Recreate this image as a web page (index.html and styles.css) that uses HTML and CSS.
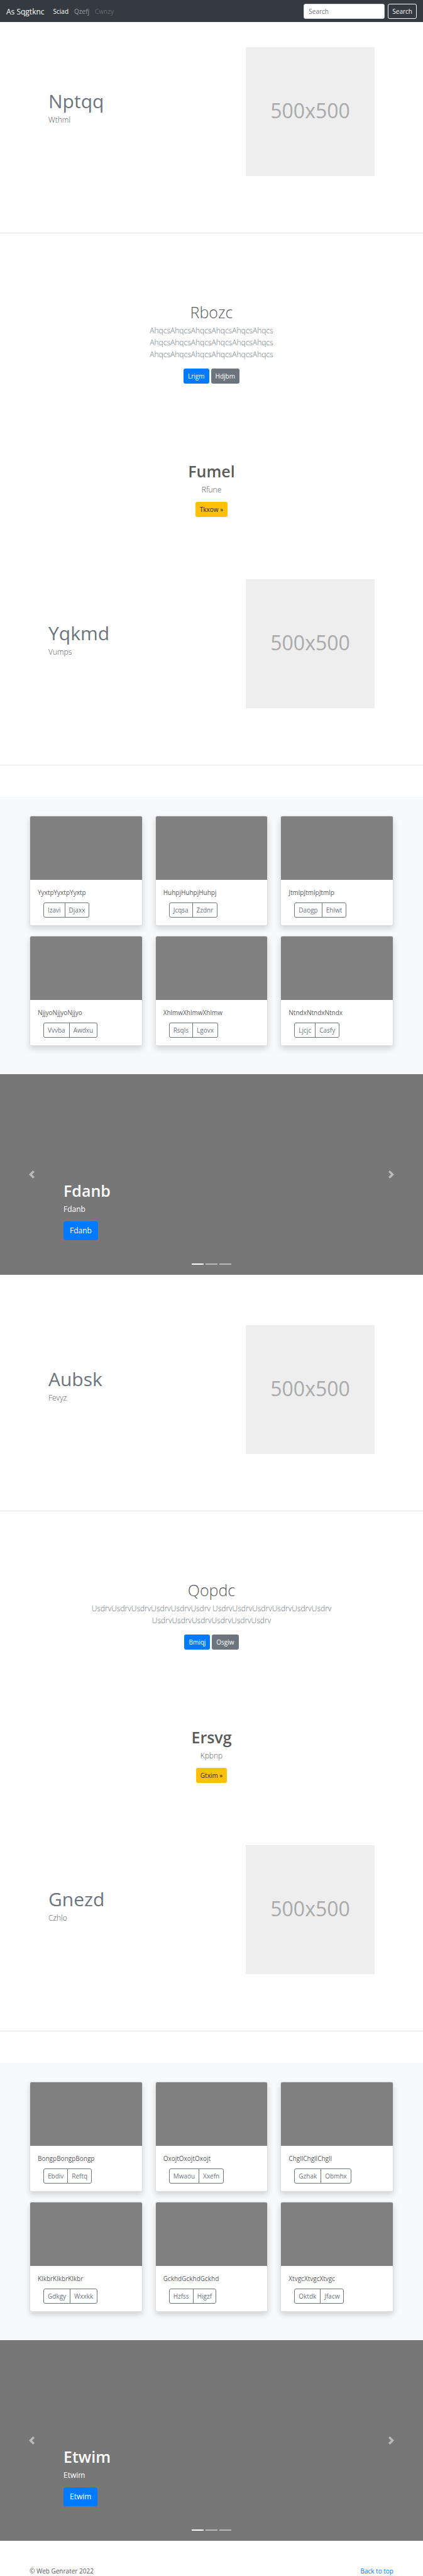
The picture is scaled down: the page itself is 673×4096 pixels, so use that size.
FILE: index.html
```html
<!DOCTYPE html>
<html lang="en">
<head>
<meta charset="utf-8">
<title>As Sqgtknc</title>
<link rel="stylesheet" href="styles.css">
</head>
<body id="top">
<header class="navbar">
  <a class="brand" href="#">As Sqgtknc</a>
  <nav class="nav-links">
    <a class="active" href="#">Sciad</a>
    <a href="#">Qzefj</a>
    <a class="disabled" href="#">Cwnzy</a>
  </nav>
  <form class="search">
    <input type="text" placeholder="Search" aria-label="Search">
    <button class="btn btn-light" type="submit">Search</button>
  </form>
</header>
<main>
  <section class="featurette first">
    <div class="copy"><h2>Nptqq</h2><p class="lead">Wthml</p></div>
    <div class="placeholder">500x500</div>
  </section>
  <hr>
  <section class="intro">
    <h1>Rbozc</h1>
    <p class="lead muted narrow">AhqcsAhqcsAhqcsAhqcsAhqcsAhqcs AhqcsAhqcsAhqcsAhqcsAhqcsAhqcs AhqcsAhqcsAhqcsAhqcsAhqcsAhqcs</p>
    <div class="actions"><a class="btn btn-primary" href="#">Lrigm</a><a class="btn btn-secondary" href="#">Hdjbm</a></div>
  </section>
  <section class="callout">
    <h2>Fumel</h2>
    <p class="lead">Rfune</p>
    <a class="btn btn-warning" href="#">Tkxow »</a>
  </section>
  <section class="featurette">
    <div class="copy"><h2>Yqkmd</h2><p class="lead">Vumps</p></div>
    <div class="placeholder">500x500</div>
  </section>
  <hr>
  <section class="album">
    <article class="card"><div class="thumb"></div><div class="card-body"><p>YyxtpYyxtpYyxtp</p><div class="group"><button type="button">Izavi</button><button type="button">Djaxx</button></div></div></article>
    <article class="card"><div class="thumb"></div><div class="card-body"><p>HuhpjHuhpjHuhpj</p><div class="group"><button type="button">Jcqsa</button><button type="button">Zzdnr</button></div></div></article>
    <article class="card"><div class="thumb"></div><div class="card-body"><p>JtmlpJtmlpJtmlp</p><div class="group"><button type="button">Daogp</button><button type="button">Ehlwt</button></div></div></article>
    <article class="card"><div class="thumb"></div><div class="card-body"><p>NjjyoNjjyoNjjyo</p><div class="group"><button type="button">Vvvba</button><button type="button">Awdxu</button></div></div></article>
    <article class="card"><div class="thumb"></div><div class="card-body"><p>XhlmwXhlmwXhlmw</p><div class="group"><button type="button">Rsqls</button><button type="button">Lgovx</button></div></div></article>
    <article class="card"><div class="thumb"></div><div class="card-body"><p>NtndxNtndxNtndx</p><div class="group"><button type="button">Ljcjc</button><button type="button">Casfy</button></div></div></article>
  </section>
  <section class="carousel">
    <button class="arrow" type="button" aria-label="Previous"><svg viewBox="0 0 8 8"><path d="M5.25 0l-4 4 4 4 1.5-1.5-2.5-2.5 2.5-2.5-1.5-1.5z"/></svg></button>
    <div class="slide">
      <h1>Fdanb</h1>
      <p>Fdanb</p>
      <a class="btn btn-primary btn-lg" href="#">Fdanb</a>
      <div class="indicators"><button class="on" type="button" aria-label="Slide 1"></button><button type="button" aria-label="Slide 2"></button><button type="button" aria-label="Slide 3"></button></div>
    </div>
    <button class="arrow" type="button" aria-label="Next"><svg viewBox="0 0 8 8"><path d="M2.75 0l-1.5 1.5 2.5 2.5-2.5 2.5 1.5 1.5 4-4-4-4z"/></svg></button>
  </section>

  <section class="featurette second">
    <div class="copy"><h2>Aubsk</h2><p class="lead">Fevyz</p></div>
    <div class="placeholder">500x500</div>
  </section>
  <hr>
  <section class="intro">
    <h1>Qopdc</h1>
    <p class="lead muted">UsdrvUsdrvUsdrvUsdrvUsdrvUsdrv UsdrvUsdrvUsdrvUsdrvUsdrvUsdrv UsdrvUsdrvUsdrvUsdrvUsdrvUsdrv</p>
    <div class="actions"><a class="btn btn-primary" href="#">Bmiqj</a><a class="btn btn-secondary" href="#">Osgiw</a></div>
  </section>
  <section class="callout">
    <h2>Ersvg</h2>
    <p class="lead">Kpbnp</p>
    <a class="btn btn-warning" href="#">Gtxim »</a>
  </section>
  <section class="featurette">
    <div class="copy"><h2>Gnezd</h2><p class="lead">Czhlo</p></div>
    <div class="placeholder">500x500</div>
  </section>
  <hr>
  <section class="album">
    <article class="card"><div class="thumb"></div><div class="card-body"><p>BongpBongpBongp</p><div class="group"><button type="button">Ebdiv</button><button type="button">Reftq</button></div></div></article>
    <article class="card"><div class="thumb"></div><div class="card-body"><p>OxojtOxojtOxojt</p><div class="group"><button type="button">Mwaou</button><button type="button">Xxefn</button></div></div></article>
    <article class="card"><div class="thumb"></div><div class="card-body"><p>ChgllChgllChgll</p><div class="group"><button type="button">Gzhak</button><button type="button">Obmhx</button></div></div></article>
    <article class="card"><div class="thumb"></div><div class="card-body"><p>KlkbrKlkbrKlkbr</p><div class="group"><button type="button">Gdkgy</button><button type="button">Wxxkk</button></div></div></article>
    <article class="card"><div class="thumb"></div><div class="card-body"><p>GckhdGckhdGckhd</p><div class="group"><button type="button">Hzfss</button><button type="button">Higzf</button></div></div></article>
    <article class="card"><div class="thumb"></div><div class="card-body"><p>XtvgcXtvgcXtvgc</p><div class="group"><button type="button">Oktdk</button><button type="button">Jfacw</button></div></div></article>
  </section>
  <section class="carousel">
    <button class="arrow" type="button" aria-label="Previous"><svg viewBox="0 0 8 8"><path d="M5.25 0l-4 4 4 4 1.5-1.5-2.5-2.5 2.5-2.5-1.5-1.5z"/></svg></button>
    <div class="slide">
      <h1>Etwim</h1>
      <p>Etwim</p>
      <a class="btn btn-primary btn-lg" href="#">Etwim</a>
      <div class="indicators"><button class="on" type="button" aria-label="Slide 1"></button><button type="button" aria-label="Slide 2"></button><button type="button" aria-label="Slide 3"></button></div>
    </div>
    <button class="arrow" type="button" aria-label="Next"><svg viewBox="0 0 8 8"><path d="M2.75 0l-1.5 1.5 2.5 2.5-2.5 2.5 1.5 1.5 4-4-4-4z"/></svg></button>
  </section>
</main>
<footer class="footer">
  <span>© Web Genrater 2022</span>
  <a href="#top">Back to top</a>
</footer>
</body>
</html>
```
FILE: styles.css
```css
* { box-sizing: border-box; }
body {
  margin: 0;
  background: #fff;
  color: #5a5a5a;
  font: 400 10px/15px "Open Sans", "Noto Sans", sans-serif;
}
h1, h2, p { margin: 0; }
a { color: #007bff; text-decoration: none; }
button, input { font: inherit; }
hr { margin: 0; border: 0; border-top: 1px solid #e5e5e5; }

.navbar {
  display: flex;
  align-items: center;
  padding: 6px 10px 5px;
  background: #343a40;
}
.brand { color: #fff; font-size: 12px; line-height: 19px; }
.nav-links { display: flex; gap: 9px; margin-left: 14px; }
.nav-links a { color: #9a9da0; }
.nav-links .active { color: #fff; }
.nav-links .disabled { color: #676b70; }
.search { display: flex; gap: 5px; margin-left: auto; }
.search input {
  width: 129px;
  height: 24px;
  padding: 0 7px;
  border: 1px solid #ced4da;
  border-radius: 3px;
}
.search input::placeholder { color: #6c757d; opacity: 1; }

.btn {
  display: inline-block;
  height: 24px;
  padding: 4px 6px 3px;
  border: 1px solid transparent;
  border-radius: 3px;
  line-height: 15px;
}
.btn-light { border-color: #f8f9fa; background: transparent; color: #f8f9fa; }
.btn-primary { background: #007bff; color: #fff; }
.btn-secondary { background: #6c757d; color: #fff; }
.btn-warning { background: #ffc107; color: #212529; }
.btn-lg { height: 30px; padding: 5px 9px; border-radius: 4px; font-size: 12px; line-height: 18px; }

.lead { font-size: 12px; font-weight: 300; line-height: 19px; }
.muted { color: #6c757d; }

.featurette {
  display: flex;
  align-items: center;
  justify-content: space-between;
  padding: 99px 77px 90px;
}
.featurette.first { padding-top: 40px; }
.featurette.second { padding-top: 80px; }
.featurette h2 { margin-bottom: 5px; color: #6c757d; font-size: 30px; font-weight: 400; line-height: 30px; }
.copy { padding-bottom: 10px; }
.placeholder {
  width: 205px;
  aspect-ratio: 1;
  display: grid;
  place-items: center;
  padding-bottom: 3px;
  background: #eee;
  color: #aaa;
  font-size: 32px;
  line-height: 40px;
}

.intro { padding: 110px 60px 0; text-align: center; }
.intro h1 { font-size: 25px; font-weight: 300; line-height: 30px; }
.intro .lead { width: 400px; max-width: 100%; margin: 5px auto 13px; }
.intro .narrow { width: 300px; }
.actions { display: flex; justify-content: center; gap: 3px; }

.callout {
  display: flex;
  flex-direction: column;
  align-items: center;
  padding: 124px 60px 0;
}
.callout h2 { font-size: 25px; font-weight: 600; line-height: 30px; }
.callout .lead { margin: 5px 0 10px; }

.album {
  display: grid;
  grid-template-columns: repeat(3, 1fr);
  gap: 16px 20px;
  margin-top: 50px;
  padding: 30px 47px 45px;
  background: #f8f9fa;
}
.card {
  overflow: hidden;
  border: 1px solid #dfdfdf;
  border-radius: 3px;
  background: #fff;
  box-shadow: 0 5px 10px rgba(0, 0, 0, .15);
}
.thumb { height: 101px; background: #808080; }
.card-body { padding: 13px 12px 12px; }
.card-body p { margin-bottom: 8px; }
.group { display: flex; margin-left: 9px; }
.group button {
  height: 24px;
  padding: 0 6px;
  border: 1px solid #6c757d;
  border-radius: 3px 0 0 3px;
  background: transparent;
  color: #6c757d;
}
.group button + button { margin-left: -1px; border-radius: 0 3px 3px 0; }

.carousel {
  display: grid;
  grid-template-columns: 101px 1fr 101px;
  height: 319px;
  background: #777;
  color: #fff;
}
.arrow { display: grid; place-items: center; padding: 0; border: 0; background: none; opacity: .5; }
.arrow svg { width: 13px; height: 13px; fill: #fff; }
.slide { display: flex; flex-direction: column; align-items: flex-start; justify-content: flex-end; }
.slide h1 { font-size: 25px; font-weight: 600; line-height: 30px; }
.slide p { margin: 5px 0 10px; font-size: 12px; line-height: 19px; }
.indicators { display: flex; align-self: center; gap: 3px; padding: 37px 0 16px; }
.indicators button { width: 19px; height: 2px; padding: 0; border: 0; background: #fff; opacity: .5; }
.indicators .on { opacity: 1; }

.footer { display: flex; justify-content: space-between; padding: 41px 47px 0; }
```
